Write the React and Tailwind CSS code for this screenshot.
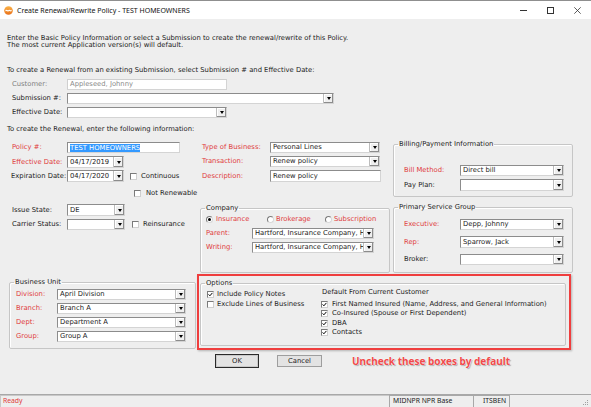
import React from "react";

const RED = "text-[#e03c3c]";

function Arrow() {
  return (
    <div className="w-[10px] h-full shrink-0 flex items-center justify-center bg-[#efefef] border-l border-[#bdbdbd] shadow-[inset_-1px_-1px_0_#8c8c8c,inset_1px_1px_0_#ffffff]">
      <div className="w-0 h-0 border-x-[2.5px] border-x-transparent border-t-[3px] border-t-[#000000]" />
    </div>
  );
}

function Combo({ value = "", className = "" }) {
  return (
    <div className={`flex bg-white border border-[#8c8c8c] border-r-[#d4d4d4] border-b-[#d4d4d4] ${className}`}>
      <div className="flex-1 min-w-0 flex items-center pl-[2px] whitespace-nowrap overflow-hidden leading-none">{value}</div>
      <Arrow />
    </div>
  );
}

function TextBox({ children, className = "" }) {
  return (
    <div className={`flex items-center bg-white border border-[#8c8c8c] border-r-[#d4d4d4] border-b-[#d4d4d4] pl-[2px] whitespace-nowrap overflow-hidden leading-none ${className}`}>
      {children}
    </div>
  );
}

function Check({ checked = false }) {
  return (
    <div className="w-[7px] h-[7px] shrink-0 bg-white border border-[#7a7a7a] border-r-[#cfcfcf] border-b-[#cfcfcf] flex items-center justify-center">
      {checked && (
        <svg width="5" height="5" viewBox="0 0 5 5">
          <path d="M0.6 2.4 L1.9 3.8 L4.4 0.9" stroke="#000" strokeWidth="1" fill="none" />
        </svg>
      )}
    </div>
  );
}

function Radio({ checked = false }) {
  return (
    <div className="w-[7px] h-[7px] shrink-0 rounded-full bg-white border border-[#7a7a7a] border-r-[#d8d8d8] border-b-[#d8d8d8] flex items-center justify-center">
      {checked && <div className="w-[3px] h-[3px] rounded-full bg-black" />}
    </div>
  );
}

function Row({ label, labelW, labelCls = "", className = "", children }) {
  return (
    <div className={`flex items-center shrink-0 ${className}`}>
      <div className={`shrink-0 whitespace-nowrap leading-none ${labelW} ${labelCls}`}>{label}</div>
      {children}
    </div>
  );
}

function Group({ title, className = "", children }) {
  return (
    <fieldset className={`shrink-0 border border-[#c6c6c6] rounded-[2px] shadow-[inset_1px_1px_0_#ffffff] ${className}`}>
      <legend className="ml-[4px] px-[1px] leading-[8px] whitespace-nowrap">{title}</legend>
      {children}
    </fieldset>
  );
}

function TitleIcon() {
  return (
    <svg className="ml-[4px] shrink-0" width="9" height="9" viewBox="0 0 10 10">
      <defs>
        <linearGradient id="og" x1="0" y1="0" x2="0" y2="1">
          <stop offset="0" stopColor="#fbb347" />
          <stop offset="1" stopColor="#e8701a" />
        </linearGradient>
      </defs>
      <circle cx="5" cy="5" r="4.8" fill="url(#og)" />
      <path d="M1.6 4.6 C3 3.2 4 5.8 5.2 4.4 C6.3 3.2 7.3 5.6 8.5 4.3 L8.5 5.6 C7.3 6.9 6.3 4.6 5.2 5.8 C4 7.1 3 4.6 1.6 6 Z" fill="#ffffff" />
    </svg>
  );
}

export default function App() {
  return (
    <div className="w-[591px] h-[407px] overflow-hidden bg-[#eeeeee] flex flex-col text-[#1b1b1b] font-['DejaVu_Sans',Verdana,sans-serif] text-[6.8px]">
      {/* Title bar */}
      <div className="h-[19px] shrink-0 bg-white border-t border-[#8f8f8f] flex items-center">
        <TitleIcon />
        <div className="ml-[4px] font-['Noto_Sans',sans-serif] text-[7px] text-[#111111] leading-none">
          Create Renewal/Rewrite Policy - TEST HOMEOWNERS
        </div>
        <div className="ml-auto flex h-full">
          <div className="w-[27px] flex items-center justify-center">
            <div className="w-[7px] h-px bg-[#333333]" />
          </div>
          <div className="w-[27px] flex items-center justify-center">
            <div className="w-[7px] h-[7px] border border-[#333333]" />
          </div>
          <div className="w-[27px] flex items-center justify-center">
            <svg width="7" height="7" viewBox="0 0 7 7">
              <path d="M0.3 0.3 L6.7 6.7 M6.7 0.3 L0.3 6.7" stroke="#333" strokeWidth="0.8" />
            </svg>
          </div>
        </div>
      </div>

      {/* Body */}
      <div className="flex-1 flex flex-col pl-[7px]">
        <div className="mt-[16px] leading-[7px]">
          <div>Enter the Basic Policy Information or select a Submission to create the renewal/rewrite of this Policy.</div>
          <div>The most current Application version(s) will default.</div>
        </div>
        <div className="mt-[18px] leading-[7px]">
          To create a Renewal from an existing Submission, select Submission # and Effective Date:
        </div>

        <Row label="Customer:" labelW="w-[60px] pl-[5px]" labelCls="text-[#808080]" className="mt-[5px] h-[11px]">
          <TextBox className="w-[160px] h-full text-[#8a8a8a] border-[#cfcfcf]">Appleseed, Johnny</TextBox>
        </Row>
        <Row label="Submission #:" labelW="w-[60px] pl-[5px]" className="mt-[3px] h-[11px]">
          <Combo className="w-[267px] h-full" />
        </Row>
        <Row label="Effective Date:" labelW="w-[60px] pl-[5px]" className="mt-[3px] h-[11px]">
          <Combo className="w-[160px] h-full" />
        </Row>

        <div className="mt-[8px] leading-[7px]">To create the Renewal, enter the following information:</div>

        {/* Three columns */}
        <div className="mt-[7px] flex h-[133px] shrink-0">
          {/* Left */}
          <div className="w-[190px] pt-[2px] flex flex-col">
            <Row label="Policy #:" labelW="w-[60px] pl-[5px]" labelCls={RED} className="h-[11px]">
              <TextBox className="w-[113px] h-full">
                <span className="bg-[#3399ff] text-white leading-[8px]">TEST HOMEOWNERS</span>
              </TextBox>
            </Row>
            <Row label="Effective Date:" labelW="w-[60px] pl-[5px]" labelCls={RED} className="mt-[3px] h-[12px]">
              <Combo className="w-[57px] h-full" value="04/17/2019" />
            </Row>
            <Row label="Expiration Date:" labelW="w-[60px] pl-[4px]" className="mt-[2px] h-[12px]">
              <Combo className="w-[57px] h-full" value="04/17/2020" />
              <div className="ml-[6px]"><Check /></div>
              <span className="ml-[4px] leading-none">Continuous</span>
            </Row>
            <div className="mt-[5px] h-[12px] flex items-center pl-[127px] whitespace-nowrap">
              <Check />
              <span className="ml-[5px] leading-none whitespace-nowrap">Not Renewable</span>
            </div>
            <Row label="Issue State:" labelW="w-[60px] pl-[5px]" className="mt-[5px] h-[12px]">
              <Combo className="w-[58px] h-full" value="DE" />
            </Row>
            <Row label="Carrier Status:" labelW="w-[60px] pl-[5px]" className="mt-[3px] h-[11px]">
              <Combo className="w-[58px] h-full" />
              <div className="ml-[7px]"><Check /></div>
              <span className="ml-[4px] leading-none">Reinsurance</span>
            </Row>
          </div>

          {/* Middle */}
          <div className="w-[196px] pt-[2px] flex flex-col">
            <Row label="Type of Business:" labelW="w-[73px] pl-[5px]" labelCls={RED} className="h-[11px]">
              <Combo className="w-[110px] h-full" value="Personal Lines" />
            </Row>
            <Row label="Transaction:" labelW="w-[73px] pl-[5px]" labelCls={RED} className="mt-[3px] h-[11px]">
              <Combo className="w-[110px] h-full" value="Renew policy" />
            </Row>
            <Row label="Description:" labelW="w-[73px] pl-[5px]" labelCls={RED} className="mt-[3px] h-[12px]">
              <TextBox className="w-[111px] h-full">Renew policy</TextBox>
            </Row>
            <Group title="Company" className="ml-[3px] mt-[22px] w-[190px] h-[69px]">
              <div className="flex flex-col pl-[5px]">
                <div className={`mt-[3px] h-[8px] flex items-center ${RED}`}>
                  <div className="w-[61px] flex items-center"><Radio checked /><span className="ml-[3px] leading-none">Insurance</span></div>
                  <div className="w-[58px] flex items-center"><Radio /><span className="ml-[2px] leading-none">Brokerage</span></div>
                  <div className="flex items-center"><Radio /><span className="ml-[2px] leading-none">Subscription</span></div>
                </div>
                <Row label="Parent:" labelW="w-[46px]" labelCls={RED} className="mt-[5px] h-[11px]">
                  <Combo className="w-[122px] h-full" value="Hartford, Insurance Company, H" />
                </Row>
                <Row label="Writing:" labelW="w-[46px]" labelCls={RED} className="mt-[3px] h-[11px]">
                  <Combo className="w-[122px] h-full" value="Hartford, Insurance Company, H" />
                </Row>
              </div>
            </Group>
          </div>

          {/* Right */}
          <div className="w-[180px] flex flex-col">
            <Group title="Billing/Payment Information" className="w-[180px] h-[57px]">
              <div className="flex flex-col pl-[10px]">
                <Row label="Bill Method:" labelW="w-[56px]" labelCls={RED} className="mt-[17px] h-[11px]">
                  <Combo className="w-[104px] h-full" value="Direct bill" />
                </Row>
                <Row label="Pay Plan:" labelW="w-[56px]" className="mt-[3px] h-[12px]">
                  <Combo className="w-[104px] h-full" />
                </Row>
              </div>
            </Group>
            <Group title="Primary Service Group" className="mt-[6px] w-[180px] h-[70px]">
              <div className="flex flex-col pl-[10px]">
                <Row label="Executive:" labelW="w-[56px]" labelCls={RED} className="mt-[8px] h-[11px]">
                  <Combo className="w-[104px] h-full" value="Depp, Johnny" />
                </Row>
                <Row label="Rep:" labelW="w-[56px]" labelCls={RED} className="mt-[6px] h-[12px]">
                  <Combo className="w-[104px] h-full" value="Sparrow, Jack" />
                </Row>
                <Row label="Broker:" labelW="w-[56px]" className="mt-[6px] h-[11px]">
                  <Combo className="w-[104px] h-full" />
                </Row>
              </div>
            </Group>
          </div>
        </div>

        {/* Bottom row */}
        <div className="mt-[1px] flex items-start shrink-0">
          <Group title="Business Unit" className="ml-[2px] mt-[4px] w-[187px] h-[71px]">
            <div className="flex flex-col pl-[6px]">
              <Row label="Division:" labelW="w-[41px]" labelCls={RED} className="mt-[3px] h-[11px]">
                <Combo className="w-[129px] h-full" value="April Division" />
              </Row>
              <Row label="Branch:" labelW="w-[41px]" labelCls={RED} className="mt-[3px] h-[11px]">
                <Combo className="w-[129px] h-full" value="Branch A" />
              </Row>
              <Row label="Dept:" labelW="w-[41px]" labelCls={RED} className="mt-[3px] h-[11px]">
                <Combo className="w-[129px] h-full" value="Department A" />
              </Row>
              <Row label="Group:" labelW="w-[41px]" labelCls={RED} className="mt-[3px] h-[11px]">
                <Combo className="w-[129px] h-full" value="Group A" />
              </Row>
            </div>
          </Group>

          <div className="ml-[1px] w-[374px] h-[76px] border-2 border-[#ef3e3e] shadow-[1px_1px_2px_rgba(0,0,0,0.25)]">
            <Group title="Options" className="ml-[1px] mt-[3px] w-[366px] h-[67px]">
              <div className="flex">
                <div className="w-[120px] pl-[6px] flex flex-col">
                  <div className="mt-[3px] h-[8px] flex items-center"><Check checked /><span className="ml-[3px] leading-none">Include Policy Notes</span></div>
                  <div className="mt-[2px] h-[8px] flex items-center"><Check /><span className="ml-[3px] leading-none">Exclude Lines of Business</span></div>
                </div>
                <div className="flex flex-col">
                  <div className="mt-[1px] h-[8px] ml-[1px] flex items-center leading-none">Default From Current Customer</div>
                  <div className="mt-[4px] h-[8px] flex items-center"><Check checked /><span className="ml-[4px] leading-none">First Named Insured (Name, Address, and General Information)</span></div>
                  <div className="mt-[1px] h-[8px] flex items-center"><Check checked /><span className="ml-[4px] leading-none">Co-Insured (Spouse or First Dependent)</span></div>
                  <div className="mt-[2px] h-[8px] flex items-center"><Check checked /><span className="ml-[4px] leading-none">DBA</span></div>
                  <div className="mt-[1px] h-[8px] flex items-center"><Check checked /><span className="ml-[4px] leading-none">Contacts</span></div>
                </div>
              </div>
            </Group>
          </div>
        </div>

        {/* Buttons */}
        <div className="mt-[4px] flex items-start shrink-0">
          <div className="ml-[208px] w-[44px] h-[14px] border border-[#2a2a2a] bg-[#e3e3e3] shadow-[inset_0_0_0_1px_#c9c9c9] flex items-center justify-center leading-none">OK</div>
          <div className="ml-[18px] mt-[1px] w-[45px] h-[12px] border border-[#9e9e9e] bg-[#e3e3e3] flex items-center justify-center leading-none">Cancel</div>
          <div className="ml-[30px] mt-[1px] font-['Noto_Sans',sans-serif] font-bold text-[10px] leading-[12px] text-[#f04a4a] whitespace-nowrap [text-shadow:0_0_1px_#fff,0_0_2px_#fff,1px_1px_1px_rgba(0,0,0,0.35)]">
            Uncheck these boxes by default
          </div>
        </div>
      </div>

      {/* Status bar */}
      <div className="h-[13px] shrink-0 flex bg-[#eeeeee] border-t border-[#a8a8a8] font-['Noto_Sans',sans-serif] text-[6.8px] leading-none">
        <div className="w-[389px] flex items-center pl-[2px] text-[#e03c3c] border-l border-t border-[#c8c8c8]">Ready</div>
        <div className="w-[84px] flex items-center pl-[3px] border-l border-t border-[#a8a8a8] whitespace-nowrap">MIDNPR NPR Base</div>
        <div className="w-[37px] flex items-center pl-[9px] border-l border-t border-r border-[#a8a8a8]">ITSBEN</div>
        <div className="flex-1 flex items-end justify-end pr-[2px] pb-[1px]">
          <svg width="6" height="6" viewBox="0 0 6 6">
            <rect x="4" y="0" width="1" height="1" fill="#a0a0a0" />
            <rect x="2" y="2" width="1" height="1" fill="#a0a0a0" />
            <rect x="4" y="2" width="1" height="1" fill="#a0a0a0" />
            <rect x="0" y="4" width="1" height="1" fill="#a0a0a0" />
            <rect x="2" y="4" width="1" height="1" fill="#a0a0a0" />
            <rect x="4" y="4" width="1" height="1" fill="#a0a0a0" />
          </svg>
        </div>
      </div>
    </div>
  );
}
